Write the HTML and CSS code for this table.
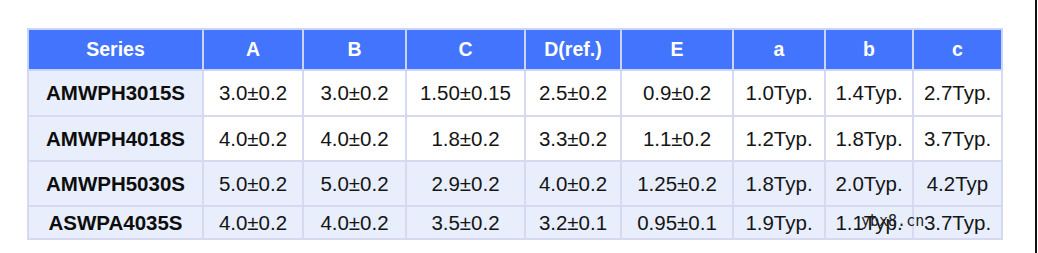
FILE: index.html
```html
<!DOCTYPE html>
<html>
<head>
<meta charset="utf-8">
<link rel="stylesheet" href="styles.css">
</head>
<body>
<div class="page">
  <div class="wrap">
    <table class="spec">
      <colgroup>
        <col class="c-series"><col class="c-a"><col class="c-b"><col class="c-c"><col class="c-d"><col class="c-e"><col class="c-sa"><col class="c-sb"><col class="c-sc">
      </colgroup>
      <thead>
        <tr class="head">
          <th>Series</th><th>A</th><th>B</th><th>C</th><th>D(ref.)</th><th>E</th><th>a</th><th>b</th><th>c</th>
        </tr>
      </thead>
      <tbody>
        <tr class="r1">
          <th>AMWPH3015S</th><td>3.0±0.2</td><td>3.0±0.2</td><td>1.50±0.15</td><td>2.5±0.2</td><td>0.9±0.2</td><td>1.0Typ.</td><td>1.4Typ.</td><td>2.7Typ.</td>
        </tr>
        <tr class="r2">
          <th>AMWPH4018S</th><td>4.0±0.2</td><td>4.0±0.2</td><td>1.8±0.2</td><td>3.3±0.2</td><td>1.1±0.2</td><td>1.2Typ.</td><td>1.8Typ.</td><td>3.7Typ.</td>
        </tr>
        <tr class="r3 tint">
          <th>AMWPH5030S</th><td>5.0±0.2</td><td>5.0±0.2</td><td>2.9±0.2</td><td>4.0±0.2</td><td>1.25±0.2</td><td>1.8Typ.</td><td>2.0Typ.</td><td>4.2Typ</td>
        </tr>
        <tr class="r4 tint">
          <th>ASWPA4035S</th><td>4.0±0.2</td><td>4.0±0.2</td><td>3.5±0.2</td><td>3.2±0.1</td><td>0.95±0.1</td><td>1.9Typ.</td><td class="wm-cell">1.1Typ.<span class="wm">ybx8.cn</span></td><td>3.7Typ.</td>
        </tr>
      </tbody>
    </table>
  </div>
</div>
</body>
</html>
```

FILE: styles.css
```css
html, body {
  margin: 0;
  padding: 0;
  background: #ffffff;
}

.page {
  width: 1035px;
  height: 253px;
  border-right: 2px solid #111111;
  box-sizing: content-box;
}

.wrap {
  padding: 28px 0 0 27px;
}

.spec {
  border-collapse: collapse;
  table-layout: fixed;
  width: 974px;
  font-family: "Liberation Sans", Arial, sans-serif;
  font-size: 20.5px;
  color: #151515;
}

.c-series { width: 175px; }
.c-a { width: 100px; }
.c-b { width: 103px; }
.c-c { width: 119px; }
.c-d { width: 96px; }
.c-e { width: 112px; }
.c-sa { width: 92px; }
.c-sb { width: 88px; }
.c-sc { width: 89px; }

.spec th,
.spec td {
  border: 2px solid #d6d9ef;
  padding: 0;
  text-align: center;
  vertical-align: middle;
  white-space: nowrap;
}

.head th {
  background: #4374fd;
  color: #ffffff;
  font-weight: bold;
  font-size: 19.5px;
  border-color: #c9d4f8;
}

.head { height: 41px; }
.r1 { height: 46px; }
.r2 { height: 45px; }
.r3 { height: 45px; }
.r4 { height: 33px; }

.spec tbody th {
  background: #e8eefc;
  font-weight: bold;
  color: #0d0d0d;
}

.spec tbody td {
  background: #ffffff;
}

.spec tbody tr.tint td {
  background: #e8eefc;
}

.wm-cell {
  position: relative;
}

.wm {
  position: absolute;
  left: 35px;
  top: 5px;
  font-family: "DejaVu Sans Mono", monospace;
  font-size: 15px;
  color: #1e1e1e;
}
```
